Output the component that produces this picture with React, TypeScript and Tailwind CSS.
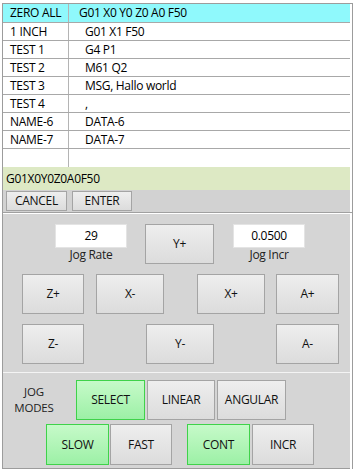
import React from 'react';

const rows = [
  { name: 'ZERO ALL', data: 'G01 X0 Y0 Z0 A0 F50', active: true },
  { name: '1 INCH', data: 'G01 X1 F50' },
  { name: 'TEST 1', data: 'G4 P1' },
  { name: 'TEST 2', data: 'M61 Q2' },
  { name: 'TEST 3', data: 'MSG, Hallo world' },
  { name: 'TEST 4', data: ',' },
  { name: 'NAME-6', data: 'DATA-6' },
  { name: 'NAME-7', data: 'DATA-7' },
];

function Btn({ label, className = '', green = false }: { label: string; className?: string; green?: boolean }) {
  const look = green
    ? 'border-[#3fd24a] bg-gradient-to-b from-[#c6fac9] to-[#9cf0a6]'
    : 'border-[#a4a4a4] bg-gradient-to-b from-[#eeeeee] to-[#dcdcdc]';
  return (
    <div className={`flex shrink-0 items-center justify-center border text-[12px] tracking-[-0.3px] text-[#111] ${look} ${className}`}>
      {label}
    </div>
  );
}

function Field({ value, label }: { value: string; label: string }) {
  return (
    <div className="flex w-[72px] shrink-0 flex-col items-center">
      <div className="flex h-[24px] w-full items-center justify-center border border-[#e4e4e4] bg-white text-[12px] tracking-[-0.3px]">
        {value}
      </div>
      <div className="mt-[1px] text-[12px] tracking-[-0.3px] text-[#222]">{label}</div>
    </div>
  );
}

export default function App() {
  return (
    <div className="h-[470px] w-[356px] bg-white pl-[2px] pt-[3px] font-['Open_Sans',sans-serif] leading-none text-black">
      <div className="w-[351px] border-l border-r border-t border-[#9c9c9c]">
        {/* program table */}
        <div className="mr-[2px] bg-white">
          {rows.map((r, i) => (
            <div
              key={r.name}
              className={`flex items-center border-b border-[#a8a8a8] text-[12px] tracking-[-0.3px] ${i === 0 ? 'h-[19px] bg-[#8ff9fc]' : 'h-[18px]'}`}
            >
              <div className="flex h-full w-[66px] shrink-0 items-center border-r border-[#b4b4b4] pl-[7px]">{r.name}</div>
              <div className={`flex h-full items-center ${r.active ? 'pl-[10px]' : 'pl-[16px]'}`}>{r.data}</div>
            </div>
          ))}
          <div className="flex h-[18px]">
            <div className="h-full w-[66px] border-r border-[#b4b4b4]" />
          </div>
          <div className="flex h-[23px] items-center bg-[#dde9c4] pl-[3px] text-[12px] tracking-[-0.3px]">
            G01X0Y0Z0A0F50
          </div>
          <div className="flex h-[22px] items-start bg-[#d2d2d2] pl-[3px] pt-[1px]">
            <Btn label="CANCEL" className="h-[20px] w-[61px]" />
            <Btn label="ENTER" className="ml-[5px] h-[20px] w-[60px]" />
          </div>
        </div>
        <div className="h-[1px] bg-[#a0a0a0]" />
        <div className="h-[1px] bg-white" />

        {/* jog panel */}
        <div className="mr-[2px] h-[158px] bg-[#d5d5d5] pt-[10px]">
          <div className="flex items-start">
            <div className="ml-[52px]">
              <Field value="29" label="Jog Rate" />
            </div>
            <Btn label="Y+" className="ml-[18px] h-[40px] w-[69px]" />
            <div className="ml-[19px]">
              <Field value="0.0500" label="Jog Incr" />
            </div>
          </div>
          <div className="mt-[10px] flex">
            <Btn label="Z+" className="ml-[19px] h-[40px] w-[62px]" />
            <Btn label="X-" className="ml-[12px] h-[40px] w-[68px]" />
            <Btn label="X+" className="ml-[33px] h-[40px] w-[68px]" />
            <Btn label="A+" className="ml-[11px] h-[40px] w-[63px]" />
          </div>
          <div className="mt-[10px] flex">
            <Btn label="Z-" className="ml-[19px] h-[40px] w-[62px]" />
            <Btn label="Y-" className="ml-[62px] h-[40px] w-[68px]" />
            <Btn label="A-" className="ml-[62px] h-[40px] w-[63px]" />
          </div>
        </div>
        <div className="mr-[2px] h-[1px] bg-[#f4f4f4]" />

        {/* jog modes */}
        <div className="mr-[2px] h-[96px] border-b border-[#9c9c9c] bg-[#d5d5d5] pt-[7px]">
          <div className="flex items-center">
            <div className="flex w-[62px] flex-col items-center text-[11.5px] leading-[16px] tracking-[-0.2px] text-[#222]">
              <span>JOG</span>
              <span>MODES</span>
            </div>
            <Btn label="SELECT" green className="ml-[11px] h-[40px] w-[69px]" />
            <Btn label="LINEAR" className="ml-[2px] h-[40px] w-[68px]" />
            <Btn label="ANGULAR" className="ml-[2px] h-[40px] w-[69px]" />
          </div>
          <div className="mt-[4px] flex">
            <Btn label="SLOW" green className="ml-[43px] h-[41px] w-[63px]" />
            <Btn label="FAST" className="ml-[1px] h-[41px] w-[62px]" />
            <Btn label="CONT" green className="ml-[15px] h-[41px] w-[63px]" />
            <Btn label="INCR" className="ml-[2px] h-[41px] w-[62px]" />
          </div>
        </div>
      </div>
    </div>
  );
}
